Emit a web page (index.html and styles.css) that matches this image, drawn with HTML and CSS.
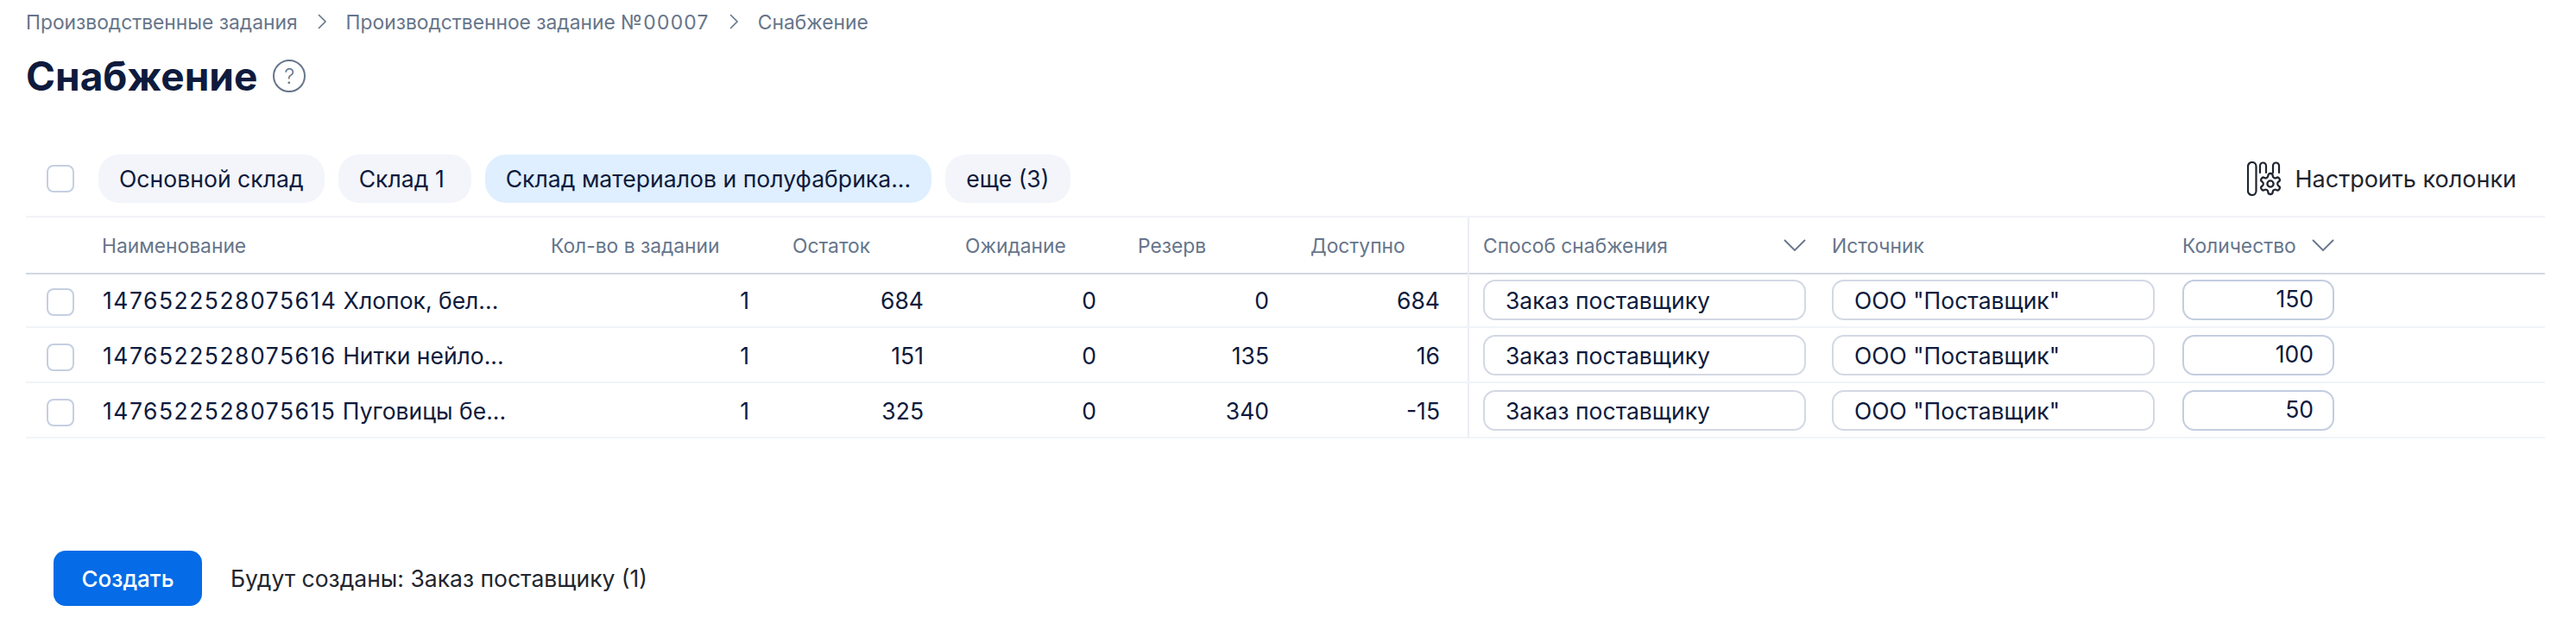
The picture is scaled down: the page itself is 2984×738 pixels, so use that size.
FILE: index.html
```html
<!DOCTYPE html>
<html lang="ru">
<head>
<meta charset="utf-8">
<title>Снабжение</title>
<link rel="stylesheet" href="styles.css">
</head>
<body>
<div class="page">
  <nav class="crumbs">
    <span>Производственные задания</span>
    <svg class="crumb-sep" viewBox="0 0 12 20"><path d="M2 2l8 8-8 8"/></svg>
    <span>Производственное задание <span class="code">№00007</span></span>
    <svg class="crumb-sep" viewBox="0 0 12 20"><path d="M2 2l8 8-8 8"/></svg>
    <span>Снабжение</span>
  </nav>
  <header class="title-row">
    <h1>Снабжение</h1>
    <span class="help">?</span>
  </header>
  <div class="toolbar">
    <span class="check"></span>
    <span class="chip">Основной склад</span>
    <span class="chip chip-short">Склад 1</span>
    <span class="chip chip-active">Склад материалов и полуфабрика...</span>
    <span class="chip">еще (3)</span>
    <button class="columns-btn">
      <svg class="columns-icon" viewBox="0 0 40 40">
        <rect x="1" y="1" width="9.5" height="38" rx="4.75"/>
        <path d="M15 13V5a3.5 3.5 0 0 1 7 0v8"/>
        <path d="M30 13V5a3.5 3.5 0 0 1 7 0v8"/>
        <g transform="translate(12.6 11.6) scale(1.2)">
          <path class="thin" d="M12.22 2h-.44a2 2 0 0 0-2 2v.18a2 2 0 0 1-1 1.73l-.43.25a2 2 0 0 1-2 0l-.15-.08a2 2 0 0 0-2.73.73l-.22.38a2 2 0 0 0 .73 2.73l.15.1a2 2 0 0 1 1 1.72v.51a2 2 0 0 1-1 1.74l-.15.09a2 2 0 0 0-.73 2.73l.22.38a2 2 0 0 0 2.73.73l.15-.08a2 2 0 0 1 2 0l.43.25a2 2 0 0 1 1 1.73V20a2 2 0 0 0 2 2h.44a2 2 0 0 0 2-2v-.18a2 2 0 0 1 1-1.73l.43-.25a2 2 0 0 1 2 0l.15.08a2 2 0 0 0 2.73-.73l.22-.39a2 2 0 0 0-.73-2.73l-.15-.08a2 2 0 0 1-1-1.74v-.5a2 2 0 0 1 1-1.74l.15-.09a2 2 0 0 0 .73-2.73l-.22-.38a2 2 0 0 0-2.73-.73l-.15.08a2 2 0 0 1-2 0l-.43-.25a2 2 0 0 1-1-1.73V4a2 2 0 0 0-2-2z"/>
          <circle class="thin" cx="12" cy="12" r="3"/>
        </g>
      </svg>
      Настроить колонки
    </button>
  </div>

  <div class="table">
    <div class="row head">
      <div></div>
      <div class="cell">Наименование</div>
      <div class="cell">Кол-во в задании</div>
      <div class="cell">Остаток</div>
      <div class="cell">Ожидание</div>
      <div class="cell">Резерв</div>
      <div class="cell">Доступно</div>
      <div class="cell split head-w"><span>Способ снабжения</span><svg class="chev" viewBox="0 0 26 14"><path d="M1 1l12 12L25 1"/></svg></div>
      <div class="cell">Источник</div>
      <div class="cell qty-head"><span>Количество</span><svg class="chev" viewBox="0 0 26 14"><path d="M1 1l12 12L25 1"/></svg></div>
    </div>

    <div class="row">
      <div class="check-cell"><span class="check"></span></div>
      <div class="cell name"><span class="sku">1476522528075614</span>&nbsp;Хлопок, бел...</div>
      <div class="cell num n1">1</div>
      <div class="cell num">684</div>
      <div class="cell num">0</div>
      <div class="cell num">0</div>
      <div class="cell num n5">684</div>
      <div class="cell split"><span class="field">Заказ поставщику</span></div>
      <div class="cell"><span class="field">ООО "Поставщик"</span></div>
      <div class="cell"><span class="field field-qty">150</span></div>
    </div>

    <div class="row">
      <div class="check-cell"><span class="check"></span></div>
      <div class="cell name"><span class="sku">1476522528075616</span>&nbsp;Нитки нейло...</div>
      <div class="cell num n1">1</div>
      <div class="cell num">151</div>
      <div class="cell num">0</div>
      <div class="cell num">135</div>
      <div class="cell num n5">16</div>
      <div class="cell split"><span class="field">Заказ поставщику</span></div>
      <div class="cell"><span class="field">ООО "Поставщик"</span></div>
      <div class="cell"><span class="field field-qty">100</span></div>
    </div>

    <div class="row">
      <div class="check-cell"><span class="check"></span></div>
      <div class="cell name"><span class="sku">1476522528075615</span>&nbsp;Пуговицы бе...</div>
      <div class="cell num n1">1</div>
      <div class="cell num">325</div>
      <div class="cell num">0</div>
      <div class="cell num">340</div>
      <div class="cell num n5">-15</div>
      <div class="cell split"><span class="field">Заказ поставщику</span></div>
      <div class="cell"><span class="field">ООО "Поставщик"</span></div>
      <div class="cell"><span class="field field-qty">50</span></div>
    </div>
  </div>

  <footer class="actions">
    <button class="primary">Создать</button>
    <span class="summary">Будут созданы: Заказ поставщику (1)</span>
  </footer>
</div>
</body>
</html>
```

FILE: styles.css
```css
* { box-sizing: border-box; }
html, body { margin: 0; background: #fff; }
body {
  font-family: Inter, "Liberation Sans", sans-serif;
  color: #0e1b3d;
  width: 2984px;
  height: 738px;
  overflow: hidden;
}
.page { padding: 0 36px 0 30px; }

.crumbs {
  height: 50px;
  display: flex;
  align-items: center;
  font-size: 22.8px;
  color: #66758a;
}
.code { letter-spacing: 1.3px; }
.crumb-sep {
  width: 12px;
  height: 20px;
  margin: 0 22px;
  fill: none;
  stroke: #66758a;
  stroke-width: 1.6;
}

.title-row {
  height: 76px;
  display: flex;
  align-items: center;
  gap: 18px;
}
h1 {
  margin: 0;
  font-size: 46px;
  font-weight: 700;
  line-height: 1;
}
.help {
  width: 38px;
  height: 38px;
  border: 2px solid #66758a;
  border-radius: 50%;
  color: #66758a;
  display: flex;
  align-items: center;
  justify-content: center;
  font-size: 24px;
  font-weight: 300;
}

.toolbar {
  margin-top: 53px;
  height: 71px;
  padding-bottom: 15px;
  display: flex;
  align-items: center;
  gap: 16px;
  font-size: 26.6px;
}
.toolbar > .check { margin-left: 24px; margin-right: 12px; }
.check {
  display: block;
  width: 32px;
  height: 32px;
  border: 2px solid #c5cfe2;
  border-radius: 8px;
  background: #fff;
}
.chip {
  height: 56px;
  padding: 0 24px;
  border-radius: 24px;
  background: #f3f5fa;
  display: flex;
  align-items: center;
  white-space: nowrap;
}
.chip-short { min-width: 154px; }
.chip-active { background: #dfefff; }
.columns-btn {
  margin-left: auto;
  margin-right: 33px;
  border: 0;
  background: none;
  padding: 0;
  font: inherit;
  font-size: 27px;
  color: #1f2530;
  display: flex;
  align-items: center;
  gap: 15px;
}
.columns-icon {
  width: 40px;
  height: 40px;
  fill: none;
  stroke: #1f2530;
  stroke-width: 2.2;
  stroke-linecap: round;
  stroke-linejoin: round;
}
.columns-icon .thin { stroke-width: 1.9; }

.table { border-top: 2px solid #f1f3f8; font-size: 26.5px; }
.row {
  display: grid;
  grid-template-columns: 88px 520px 280px 200px 200px 200px 200px 404px 406px 1fr;
  height: 64px;
  border-bottom: 2px solid #f1f3f8;
}
.row.head {
  height: 66px;
  margin-bottom: -2px;
  border-bottom-color: #d1d7e3;
  font-size: 22.8px;
  color: #66758a;
}
.cell {
  display: flex;
  align-items: center;
  white-space: nowrap;
}
.name { padding: 1px 0 0 1px; }
.sku { letter-spacing: 1.5px; }
.check-cell { display: flex; align-items: center; padding: 6px 0 0 24px; }
.num { justify-content: flex-end; padding: 1px 48px 0 0; }
.num.n1 { padding-right: 50px; }
.num.n5 { padding-right: 50px; }
.split { position: relative; }
.split::before {
  content: "";
  position: absolute;
  left: -18px;
  top: 0;
  bottom: 0;
  width: 2px;
  background: #eceef4;
}
.head-w { width: 374px; justify-content: space-between; }
.qty-head { width: 176px; justify-content: space-between; }
.chev {
  width: 26px;
  height: 14px;
  fill: none;
  stroke: #66758a;
  stroke-width: 1.8;
}
.field {
  width: 374px;
  height: 47px;
  margin-top: 1px;
  padding: 0 24px;
  border: 2px solid #d3d8e4;
  border-radius: 14px;
  display: flex;
  align-items: center;
}
.field-qty {
  width: 176px;
  padding: 0 22px 3px 0;
  justify-content: flex-end;
  border-color: #c3cde0;
}

.actions {
  margin-top: 130px;
  margin-left: 32px;
  display: flex;
  align-items: center;
  gap: 33px;
}
.primary {
  width: 172px;
  height: 64px;
  border: 0;
  border-radius: 14px;
  background: #056be6;
  color: #fff;
  font: 500 26px Inter, "Liberation Sans", sans-serif;
}
.summary { font-size: 26.5px; color: #22262e; }
```
